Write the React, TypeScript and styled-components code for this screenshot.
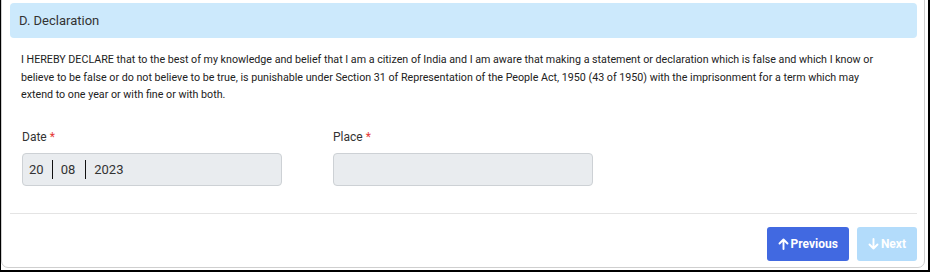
import styled, { createGlobalStyle } from "styled-components"

const GlobalStyle = createGlobalStyle`
  html, body {
    margin: 0;
    padding: 0;
    background: #ffffff;
  }
  body {
    font-family: Roboto, "Liberation Sans", Arial, sans-serif;
    color: #333333;
  }
`

const Frame = styled.div`
  box-sizing: border-box;
  width: 930px;
  height: 272px;
  border-left: 1px solid #000000;
  border-right: 2px solid #000000;
  border-bottom: 2px solid #000000;
  padding: 0 3px 1px 0;
  background: #ffffff;
  overflow: hidden;
`

const Card = styled.div`
  box-sizing: border-box;
  height: 100%;
  margin-top: -1px;
  border: 1px solid #cfcfcf;
  border-radius: 0 0 7px 7px;
  padding: 3px 7px 0 8px;
  display: flex;
  flex-direction: column;
`

const Header = styled.div`
  height: 35px;
  display: flex;
  align-items: center;
  padding: 0 9px;
  background: #cce9fc;
  border-radius: 4px;
  font-size: 13px;
  color: #333333;
`

const Body = styled.div`
  padding: 0 11px;
`

const Declaration = styled.p`
  max-width: 869px;
  margin: 13px 0 0;
  font-size: 10.7px;
  line-height: 17.6px;
  color: #222222;
`

const FieldRow = styled.div`
  display: grid;
  grid-template-columns: 260px 260px;
  column-gap: 51px;
  margin: 26px 0 0 1px;
`

const Field = styled.div`
  display: flex;
  flex-direction: column;
`

const Label = styled.label`
  font-size: 12px;
  color: #333333;
  line-height: 14px;
  margin-bottom: 9px;
  & > span {
    color: #e53935;
    margin-left: 3px;
  }
`

const InputBox = styled.div`
  box-sizing: border-box;
  height: 33px;
  background: #e9ecef;
  border: 1px solid #cdd1d5;
  border-radius: 4px;
  display: flex;
  align-items: center;
  padding: 0 6px;
  font-size: 13px;
  color: #333333;
`

const DatePart = styled.span<{ divided?: boolean }>`
  padding: 0 8px 0 ${({ divided }) => (divided ? "8px" : "0")};
  line-height: 19px;
  ${({ divided }) => divided && "border-left: 1px solid #111111;"}
  &:nth-child(2) {
    padding-right: 10px;
  }
`

const Divider = styled.hr`
  border: none;
  border-top: 1px solid #e4e4e4;
  margin: 27px 0 0;
`

const Footer = styled.div`
  display: flex;
  justify-content: flex-end;
  gap: 8px;
  margin-top: 13px;
`

const NavButton = styled.button<{ disabled?: boolean }>`
  height: 34px;
  border: none;
  border-radius: 3px;
  padding: 0 11px;
  display: flex;
  align-items: center;
  gap: 2px;
  font-family: Roboto, "Liberation Sans", Arial, sans-serif;
  font-size: 12px;
  font-weight: 700;
  color: #ffffff;
  background: ${({ disabled }) => (disabled ? "#b3dcfb" : "#4169e1")};
  cursor: ${({ disabled }) => (disabled ? "default" : "pointer")};
`

const Arrow = ({ down }: { down?: boolean }) => (
  <svg width="11" height="12" viewBox="0 0 11 12" fill="none">
    <g transform={down ? "rotate(180 5.5 6)" : undefined}>
      <path d="M5.5 11V1.5M1.5 5.5L5.5 1.5L9.5 5.5" stroke="#ffffff" strokeWidth="1.9" strokeLinecap="round" strokeLinejoin="round" />
    </g>
  </svg>
)

const App = () => {
  return (
    <>
      <GlobalStyle />
      <Frame>
        <Card>
          <Header>D. Declaration</Header>
          <Body>
            <Declaration>
              I HEREBY DECLARE that to the best of my knowledge and belief that I am a citizen of India and I am aware that making a statement or declaration which is false and which I know or believe to be false or do not believe to be true, is punishable under Section 31 of Representation of the People Act, 1950 (43 of 1950) with the imprisonment for a term which may extend to one year or with fine or with both.
            </Declaration>
            <FieldRow>
              <Field>
                <Label>Date<span>*</span></Label>
                <InputBox>
                  <DatePart>20</DatePart>
                  <DatePart divided>08</DatePart>
                  <DatePart divided>2023</DatePart>
                </InputBox>
              </Field>
              <Field>
                <Label>Place<span>*</span></Label>
                <InputBox />
              </Field>
            </FieldRow>
          </Body>
          <Divider />
          <Footer>
            <NavButton>
              <Arrow /> Previous
            </NavButton>
            <NavButton disabled>
              <Arrow down /> Next
            </NavButton>
          </Footer>
        </Card>
      </Frame>
    </>
  )
}

export default App
